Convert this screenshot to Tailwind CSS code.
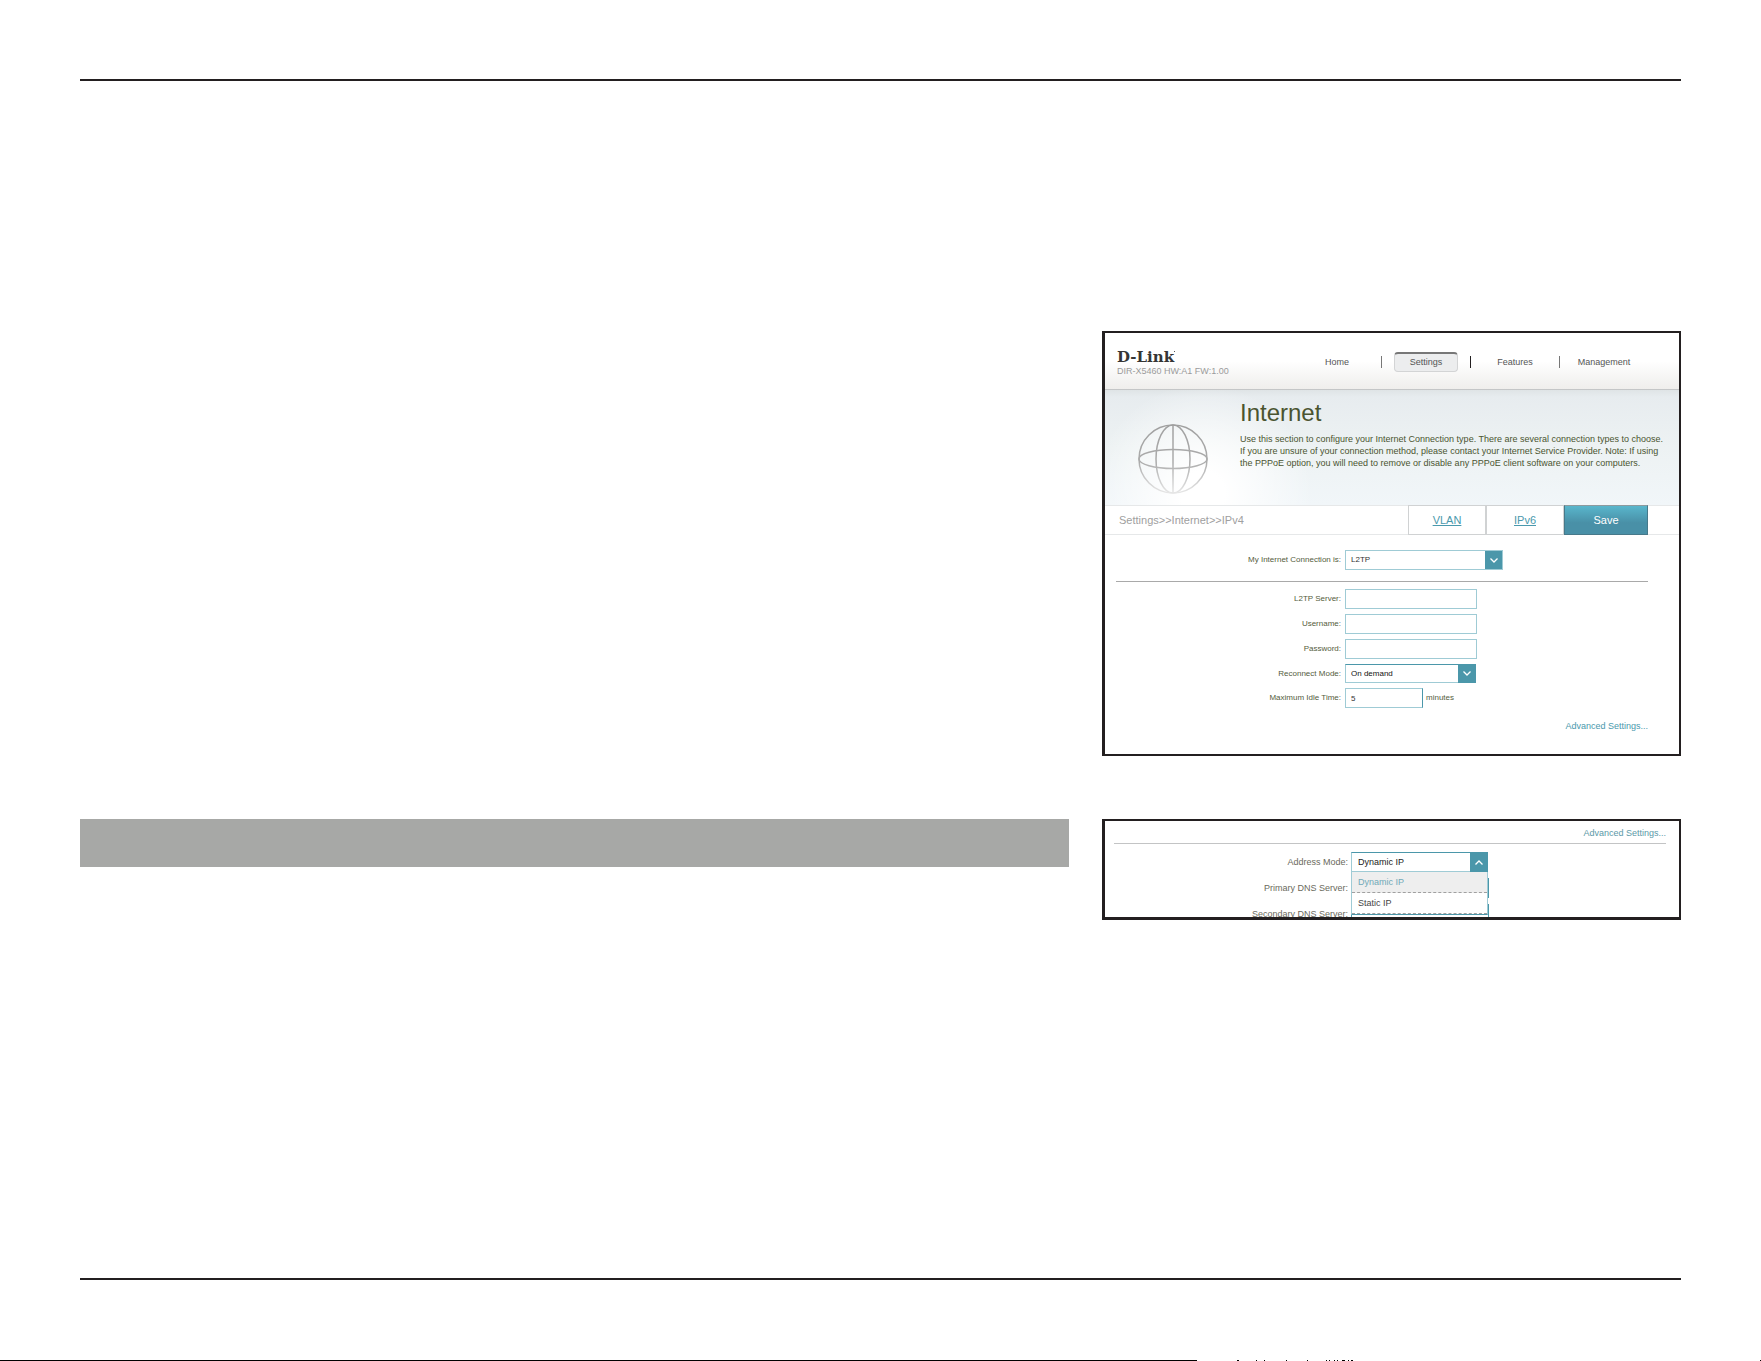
<!DOCTYPE html>
<html lang="en">
<head>
    <meta charset="UTF-8">
    <meta name="viewport" content="width=device-width, initial-scale=1.0">
    <title>D-Link DIR-X5460 - Internet (L2TP)</title>
    <script src="https://cdn.jsdelivr.net/npm/@tailwindcss/browser@4"></script>
</head>
<body class="min-h-screen flex flex-col bg-white font-['Liberation_Sans',Arial,sans-serif]">

    <div class="flex-1 flex flex-col px-20 pt-[79px] pb-20">
        <main class="flex-1 border-y-2 border-[#231f20] pt-[250px]">
            <div class="grid grid-cols-[989fr_579fr] gap-x-[33px] gap-y-[63px]">

                <!-- Router page: Internet / IPv4 -->
                <section class="col-start-2 border-2 border-l-3 border-[#231f20] bg-white">
                    <header class="h-[57px] flex items-center pl-3 pr-[31px] pt-px bg-linear-to-b from-white from-50% to-[#efeeec] border-b border-[#c4c6c7]">
                        <div class="pt-0.5">
                            <div class="relative w-fit font-['DejaVu_Serif',serif] font-bold text-[15px] leading-4 text-[#353535]">D-Link<span class="absolute left-full top-0.5 w-px h-px bg-[#555]"></span></div>
                            <p class="text-[9px] leading-3 text-[#9b9b9b]">DIR-X5460 HW:A1 FW:1.00</p>
                        </div>
                        <nav class="ml-auto flex items-center text-[9px] leading-3 text-[#555]">
                            <a href="#" class="w-[88px] text-center">Home</a>
                            <span class="w-px h-3 bg-[#777]"></span>
                            <a href="#" class="mx-3 w-16 h-5 flex items-center justify-center rounded-sm border border-[#d3d4d5] border-t-2 border-t-[#777] bg-[#ecedee]">Settings</a>
                            <span class="w-px h-3 bg-[#231f20]"></span>
                            <a href="#" class="w-[88px] text-center">Features</a>
                            <span class="w-px h-3 bg-[#777]"></span>
                            <a href="#" class="w-[88px] text-center">Management</a>
                        </nav>
                    </header>

                    <div class="h-[115px] flex bg-[radial-gradient(ellipse_110px_110px_at_17%_90%,#ffffff_20%,transparent),linear-gradient(#dfe4e6,#e7ecef_6%,#edf2f3_50%,#f1f6f9)]">
                        <svg class="ml-[33px] mt-[34px] size-[70px] shrink-0" viewBox="0 0 70 70" fill="none" stroke="url(#fade)" stroke-width="1.5">
                            <defs>
                                <linearGradient id="fade" gradientUnits="userSpaceOnUse" x1="0" y1="0" x2="0" y2="70">
                                    <stop offset="0" stop-color="#a0a0a0"/>
                                    <stop offset=".55" stop-color="#acacac"/>
                                    <stop offset="1" stop-color="#e8e8e8"/>
                                </linearGradient>
                            </defs>
                            <circle cx="35" cy="35" r="34"/>
                            <ellipse cx="35" cy="35" rx="17" ry="34"/>
                            <ellipse cx="35" cy="35" rx="34" ry="9.5"/>
                            <path d="M35 1L35.01 69"/>
                        </svg>
                        <div class="ml-8 pt-2 text-[#4a5430]">
                            <h1 class="text-2xl leading-[30px]">Internet</h1>
                            <p class="mt-[5px] text-[9px] leading-3 whitespace-nowrap">Use this section to configure your Internet Connection type. There are several connection types to choose.<br>If you are unsure of your connection method, please contact your Internet Service Provider. Note: If using<br>the PPPoE option, you will need to remove or disable any PPPoE client software on your computers.</p>
                        </div>
                    </div>

                    <div class="h-[30px] flex items-stretch pr-[31px] border-y border-[#e6e8e9] text-[11px]">
                        <p class="flex-1 self-center pl-[14px] text-[#a0a0a0]">Settings&gt;&gt;Internet&gt;&gt;IPv4</p>
                        <a href="#" class="-my-px w-[78px] flex items-center justify-center border border-[#d0d2d3] text-[#4a99ad] underline">VLAN</a>
                        <a href="#" class="-my-px w-[78px] flex items-center justify-center border border-[#d0d2d3] text-[#4a99ad] underline">IPv6</a>
                        <button type="button" class="-my-px w-[84px] border border-[#47798a] border-t-[#8d9a9e] bg-linear-to-b from-[#59b6cc] to-[#4990a7] to-60% text-white">Save</button>
                    </div>

                    <form class="ml-[11px] mr-[31px] text-[8px] leading-3 text-[#545c3c]">
                        <div class="grid grid-cols-[225fr_303fr] gap-x-1 items-center pt-[15px] pb-[11px] border-b border-[#a9a9a9]">
                            <label for="connection" class="text-right">My Internet Connection is:</label>
                            <div class="relative w-[158px]">
                                <select id="connection" class="block w-full h-5 pl-[5px] appearance-none border border-[#9fcbd5] bg-white text-[#333]">
                                    <option>L2TP</option>
                                </select>
                                <span class="absolute inset-y-px right-px w-[17px] flex items-center justify-center bg-[#4b97aa] pointer-events-none">
                                    <svg class="w-2 h-[5px]" viewBox="0 0 8 5" fill="none" stroke="#fff" stroke-width="1.3"><path d="M.5.5L4 4 7.500.5"/></svg>
                                </span>
                            </div>
                        </div>

                        <div class="grid grid-cols-[225fr_303fr] gap-x-1 gap-y-[5px] items-center pt-[7px]">
                            <label for="server" class="text-right">L2TP Server:</label>
                            <input id="server" type="text" class="w-[132px] h-5 px-[5px] border border-[#9fcbd5]">
                            <label for="username" class="text-right">Username:</label>
                            <input id="username" type="text" class="w-[132px] h-5 px-[5px] border border-[#9fcbd5]">
                            <label for="password" class="text-right">Password:</label>
                            <input id="password" type="password" class="w-[132px] h-5 px-[5px] border border-[#9fcbd5]">
                            <label for="reconnect" class="text-right">Reconnect Mode:</label>
                            <div class="relative w-[131px]">
                                <select id="reconnect" class="block w-full h-[19px] pl-[5px] appearance-none border border-[#9fcbd5] border-t-[#4b97aa] bg-white text-[#111]">
                                    <option>On demand</option>
                                </select>
                                <span class="absolute inset-y-0 right-0 w-[18px] flex items-center justify-center bg-[#4b97aa] pointer-events-none">
                                    <svg class="w-2 h-[5px]" viewBox="0 0 8 5" fill="none" stroke="#fff" stroke-width="1.3"><path d="M.5.5L4 4 7.500.5"/></svg>
                                </span>
                            </div>
                            <label for="idle" class="text-right">Maximum Idle Time:</label>
                            <div class="flex items-center gap-[3px]">
                                <input id="idle" type="text" value="5" class="w-[78px] h-5 px-[5px] border border-[#9fcbd5] border-r-[#4b97aa] text-[#333]">
                                <span>minutes</span>
                            </div>
                        </div>

                        <p class="pt-3 pb-[22px] text-right text-[9px] leading-3"><a href="#" class="text-[#4a99ad]">Advanced Settings...</a></p>
                    </form>
                </section>

                <!-- Heading bar beside the advanced settings -->
                <div class="h-12 bg-[#a7a8a6]"></div>

                <!-- Advanced settings, cut off below the open drop-down -->
                <section class="h-[101px] overflow-hidden border-2 border-b-3 border-l-3 border-[#231f20] bg-white">
                    <form class="ml-[9px] mr-[13px] text-[9px] leading-3 text-[#6a6a5c]">
                        <p class="pt-1.5 pb-1 text-right border-b border-[#c3c4c5]"><a href="#" class="text-[#5b99a8]">Advanced Settings...</a></p>
                        <div class="grid grid-cols-[234fr_315fr] gap-x-[3px] gap-y-1.5 items-center pt-2">
                            <label for="address" class="text-right">Address Mode:</label>
                            <div class="relative z-10 w-[137px]">
                                <select id="address" class="block w-full h-5 pl-1.5 appearance-none border border-[#9fcbd5] border-t-[#4b97aa] bg-white text-[#222]">
                                    <option>Dynamic IP</option>
                                    <option>Static IP</option>
                                </select>
                                <span class="absolute inset-y-0 right-0 w-[18px] flex items-center justify-center bg-[#4b97aa] pointer-events-none">
                                    <svg class="w-2 h-[5px]" viewBox="0 0 8 5" fill="none" stroke="#fff" stroke-width="1.3"><path d="M.5 4.500L4 1l3.500 3.500"/></svg>
                                </span>
                                <ul class="absolute top-full inset-x-0 border-x border-[#9fcbd5] border-b border-b-[#4b97aa] bg-white text-[#444]">
                                    <li class="h-[21px] pl-1.5 leading-5 bg-[#eeeeee] border-b border-dashed border-[#a0a0a0] text-[#71a9b8]">Dynamic IP</li>
                                    <li class="h-[21px] pl-1.5 leading-5 border-b border-dashed border-[#a0a0a0]">Static IP</li>
                                </ul>
                            </div>
                            <label for="dns1" class="text-right">Primary DNS Server:</label>
                            <input id="dns1" type="text" class="w-[138px] h-5 border border-[#4b97aa]">
                            <label for="dns2" class="text-right">Secondary DNS Server:</label>
                            <input id="dns2" type="text" class="w-[138px] h-5 border border-[#4b97aa]">
                        </div>
                    </form>
                </section>
            </div>
        </main>
    </div>

    <!-- Top edge of the next page -->
    <div class="flex h-px">
        <div class="w-[68%] bg-black"></div>
        <svg class="ml-10 w-[120px] h-px" viewBox="0 0 120 1" shape-rendering="crispEdges">
            <path d="M0 0h2v1h-2zM19 0h1v1h-1zM27 0h1v1h-1zM49 0h1v1h-1zM70 0h1v1h-1zM89 0h1v1h-1zM92 0h1v1h-1zM97 0h1v1h-1zM100 0h1v1h-1zM105 0h3v1h-3zM111 0h1v1h-1zM114 0h2v1h-2z"/>
        </svg>
        <div class="ml-auto w-px bg-black"></div>
    </div>

</body>
</html>
